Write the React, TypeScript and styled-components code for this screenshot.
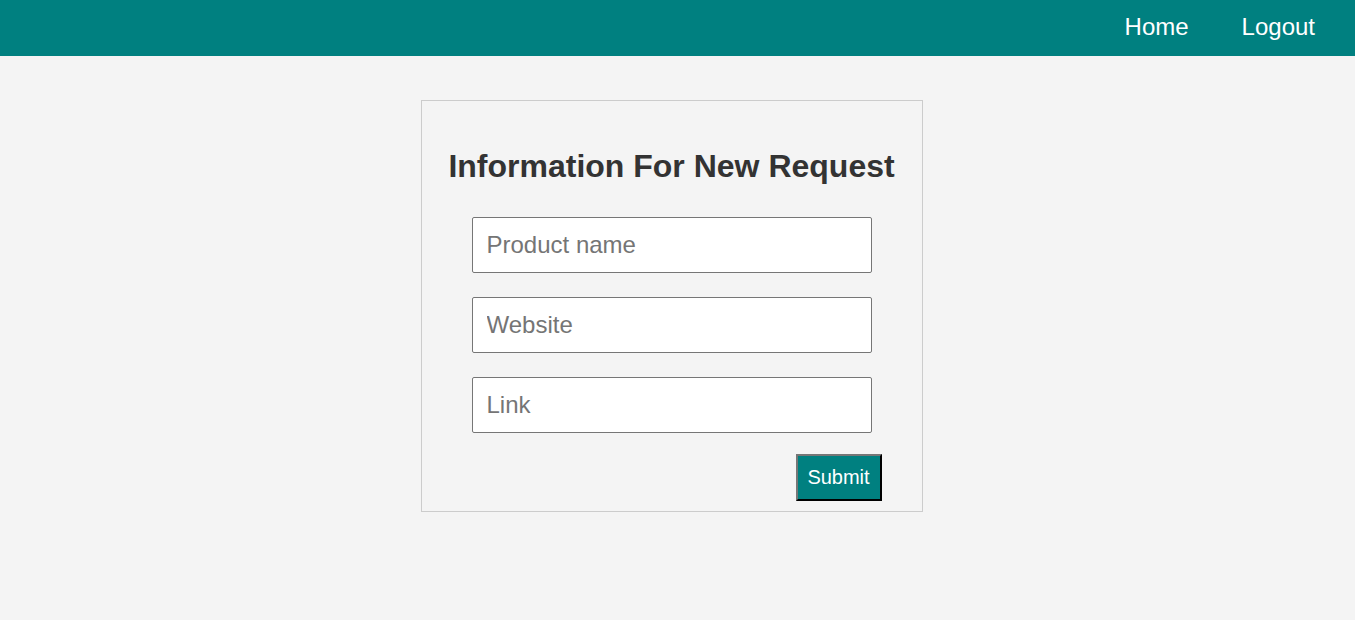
import React from "react";
import styled, { createGlobalStyle } from "styled-components";

const Global = createGlobalStyle`
  html, body { margin: 0; padding: 0; }
  body {
    background: #f4f4f4;
    font-family: "Liberation Sans", Arial, sans-serif;
    color: #333;
  }
`;

const Header = styled.header`
  height: 56px;
  background: #008080;
  display: flex;
  align-items: center;
  justify-content: flex-end;
  padding: 0 40px 2px 0;
  box-sizing: border-box;
  gap: 53px;
`;

const NavLink = styled.a`
  color: #fff;
  font-size: 24px;
  text-decoration: none;
  cursor: pointer;
`;

const Main = styled.main`
  display: flex;
  justify-content: center;
  padding: 44px 12px 0 0;
`;

const Card = styled.div`
  width: 500px;
  border: 1px solid #ccc;
  box-sizing: content-box;
  padding: 28px 0 10px;
  display: flex;
  flex-direction: column;
  align-items: center;
`;

const Title = styled.h2`
  margin: 19px 0 32px;
  font-size: 32px;
  font-weight: bold;
  color: #333;
  white-space: nowrap;
`;

const Form = styled.form`
  width: 400px;
  display: flex;
  flex-direction: column;
  gap: 24px;
`;

const Input = styled.input`
  box-sizing: border-box;
  width: 400px;
  height: 56px;
  padding: 0 14px;
  border: 1px solid #767676;
  border-radius: 2px;
  background: #fff;
  font-family: "Liberation Sans", Arial, sans-serif;
  font-size: 24px;
  color: #333;
  &::placeholder { color: #757575; }
`;

const Actions = styled.div`
  display: flex;
  justify-content: flex-end;
  margin-right: -10px;
  margin-top: -3px;
`;

const Submit = styled.button`
  box-sizing: border-box;
  width: 86px;
  height: 47px;
  background: #008080;
  color: #fff;
  font-family: "Liberation Sans", Arial, sans-serif;
  font-size: 20px;
  border: 2px outset #767676;
  border-color: #767676 #222 #222 #767676;
  padding: 0;
  cursor: pointer;
`;

export default function App() {
  return (
    <>
      <Global />
      <Header>
        <NavLink>Home</NavLink>
        <NavLink>Logout</NavLink>
      </Header>
      <Main>
        <Card>
          <Title>Information For New Request</Title>
          <Form onSubmit={(e) => e.preventDefault()}>
            <Input placeholder="Product name" />
            <Input placeholder="Website" />
            <Input placeholder="Link" />
            <Actions>
              <Submit type="submit">Submit</Submit>
            </Actions>
          </Form>
        </Card>
      </Main>
    </>
  );
}
